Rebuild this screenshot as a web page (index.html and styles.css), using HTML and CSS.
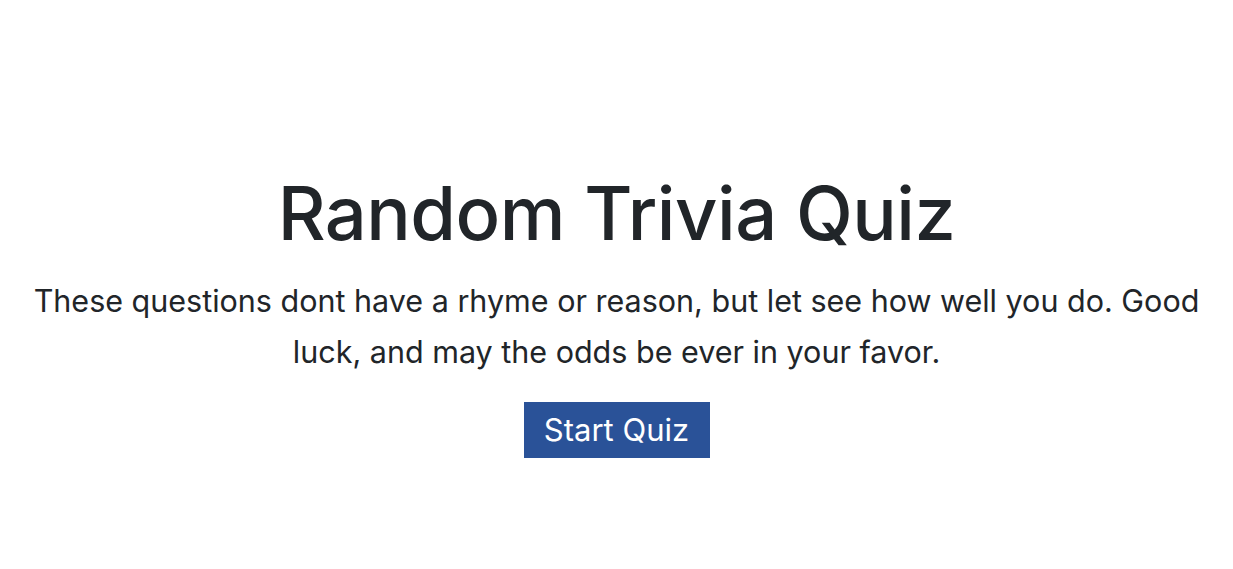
FILE: index.html
```html
<!DOCTYPE html>
<html lang="en">
<head>
<meta charset="utf-8">
<title>Random Trivia Quiz</title>
<link rel="stylesheet" href="styles.css">
</head>
<body>
<main class="page">
  <section class="intro">
    <h1 class="title">Random Trivia Quiz</h1>
    <p class="lead">These questions dont have a rhyme or reason, but let see how well you do. Good luck, and may the odds be ever in your favor.</p>
    <button class="start" type="button">Start Quiz</button>
  </section>
</main>
</body>
</html>
```
FILE: styles.css
```css
html, body {
  margin: 0;
  padding: 0;
  background: #ffffff;
}
body {
  font-family: Inter, "Noto Sans", "Liberation Sans", sans-serif;
  color: #212529;
}
.page {
  display: flex;
  justify-content: center;
  padding: 169px 20px 0;
}
.intro {
  display: flex;
  flex-direction: column;
  align-items: center;
  text-align: center;
  width: 100%;
}
.title {
  margin: 0;
  font-size: 74px;
  font-weight: 500;
  line-height: 1.2;
  letter-spacing: -0.5px;
}
.lead {
  margin: 17px 0 0;
  font-size: 30.5px;
  font-weight: 400;
  line-height: 51px;
}
.start {
  margin-top: 25px;
  background: #2a5298;
  color: #ffffff;
  border: none;
  border-radius: 0;
  font-family: inherit;
  font-size: 31px;
  font-weight: 400;
  width: 186px;
  height: 56px;
  padding: 0;
}
```
